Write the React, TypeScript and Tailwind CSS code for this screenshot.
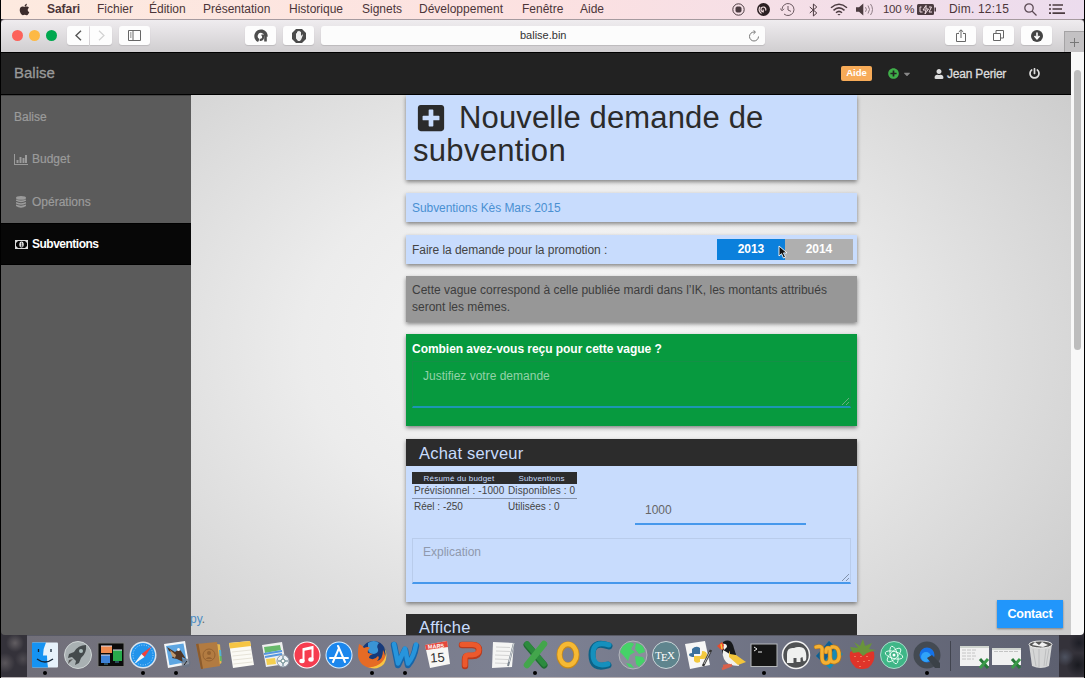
import React from "react";
import type { ReactNode } from "react";
import { FaApple, FaPowerOff, FaUser, FaCaretDown, FaPlusCircle, FaPlusSquare } from "react-icons/fa";

const menus: [string, string][] = [
  ["Fichier", "w-[52px]"],
  ["Édition", "w-[54px]"],
  ["Présentation", "w-[86px]"],
  ["Historique", "w-[73px]"],
  ["Signets", "w-[57px]"],
  ["Développement", "w-[103px]"],
  ["Fenêtre", "w-[58px]"],
  ["Aide", "w-[40px]"],
];

function MenuBar() {
  return (
    <header className="flex h-[19px] shrink-0 items-center bg-linear-to-r from-[#fdeadf] via-[#fce1e1] to-[#ecdcee] text-[12px] leading-[19px] text-[#4b3539]">
      <FaApple className="mr-[16px] ml-[17px] size-[13px] text-[#3d2d2c]" />
      <span className="w-[50px] font-bold tracking-[-0.050px]">Safari</span>
      {menus.map(([label, width]) => (
        <span key={label} className={"whitespace-nowrap " + width}>
          {label}
        </span>
      ))}
      <div className="ml-auto flex items-center">
        <svg className="mr-[12px] size-[13px]" viewBox="0 0 13 13" fill="none" stroke="#4b3b40">
          <circle cx="6.5" cy="6.5" r="5.7" />
          <rect x="4" y="4" width="5" height="5" rx="1" fill="#4b3b40" />
        </svg>
        <svg className="mr-[10px] size-[13px]" viewBox="0 0 13 13">
          <circle cx="6.5" cy="6.5" r="6.5" fill="#2b1f22" />
          <path d="M8.500 7.500A2.400 2.400 0 1 0 6.200 8.800V6.500M4.500 10.500A4.600 4.600 0 0 1 3 3.800" fill="none" stroke="#f3dde0" strokeWidth="1.200" />
        </svg>
        <svg className="mr-[14px] size-[15px]" viewBox="0 0 15 15" fill="none" stroke="#6b5960">
          <path d="M2 7.5A6 6 0 1 1 4 12M.3 6.5 2 8.800l2-2M8 4v4l3 1.400" />
        </svg>
        <svg className="mr-[12px] h-[14px] w-[9px]" viewBox="0 0 9 14" fill="none" stroke="#4b3b40" strokeWidth="1">
          <path d="m.8 4 7 6-3.400 3V1l3.400 3-7 6" />
        </svg>
        <svg className="mr-[8px] h-[13px] w-[18px]" viewBox="0 0 18 13" fill="none" stroke="#4b3b40" strokeWidth="1.500">
          <path d="M1 4.800q8-7 16 0M3.500 7.400q5.500-5 11 0M6 9.700q3-2.600 6 0" />
          <path d="M7.300 10.900h3.400L9 12.600z" fill="#4b3b40" stroke="none" />
        </svg>
        <svg className="mr-[9px] h-[13px] w-[18px]" viewBox="0 0 18 13">
          <path d="M0 4.300h3L7.300.6v11.800L3 8.700H0z" fill="#4b3b40" />
          <path d="M9.500 4.200q1.800 2.300 0 4.600M12 2.500q3 4 0 8M14.500 1q4 5.500 0 11" fill="none" stroke="#8d7c84" />
        </svg>
        <span className="w-[34px] text-[11.500px] tracking-[-0.300px] whitespace-nowrap">100 %</span>
        <svg className="mr-[13px] h-[11px] w-[19px]" viewBox="0 0 19 11">
          <rect width="17" height="11" rx="1.500" fill="#4b3b40" />
          <rect x="17.500" y="3.500" width="1.500" height="4" fill="#4b3b40" />
          <path d="M4.500 3H3v5h2.500M9 1.500 6 6h3l-1 4 3.500-5H9zM12 3h2.500L12 8h3" fill="none" stroke="#f1dde3" />
        </svg>
        <span className="w-[75px] tracking-[0.200px] whitespace-nowrap">Dim. 12:15</span>
        <svg className="mr-[12px] size-[13px]" viewBox="0 0 13 13" fill="none" stroke="#5c4b55" strokeWidth="1.300">
          <circle cx="5" cy="5" r="4.200" />
          <path d="m8 8 4.500 4.500" />
        </svg>
        <svg className="mr-[19px] h-[11px] w-[16px]" viewBox="0 0 16 11" fill="#4b3b40">
          <path d="M0 .300h2v1.400H0zM0 4.300h2v1.400H0zM0 8.300h2V10H0zM3.500.300h10.500v1.400H3.500zM3.500 4.300H13v1.400H3.500zM3.500 8.300H16v1.700H3.500z" />
        </svg>
      </div>
    </header>
  );
}

function ToolButton({ className, children }: { className: string; children: ReactNode }) {
  return (
    <div className={"flex h-[19px] items-center justify-center rounded-[3px] bg-[#fdfdfd] shadow-[0_1px_1px_#bcbabc] " + className}>
      {children}
    </div>
  );
}

function Toolbar() {
  return (
    <div className="flex h-[33px] shrink-0 items-center rounded-t-[4px] border-t border-[#a59a9f] bg-linear-to-b from-[#efecef] to-[#d0ced0] pb-px pl-[11px]">
      <div className="mr-[10px] flex gap-[6px]">
        <i className="size-[11px] rounded-full bg-[#fc625a]" />
        <i className="size-[11px] rounded-full bg-[#fdb945]" />
        <i className="size-[11px] rounded-full bg-[#00a84f]" />
      </div>
      <ToolButton className="mr-px w-[22px] rounded-r-none">
        <svg className="h-[11px] w-[7px]" viewBox="0 0 7 11" fill="none" stroke="#555" strokeWidth="1.400"><path d="M6 .8 1 5.500l5 4.700" /></svg>
      </ToolButton>
      <ToolButton className="mr-[7px] w-[22px] rounded-l-none">
        <svg className="h-[11px] w-[7px]" viewBox="0 0 7 11" fill="none" stroke="#d2d2d2" strokeWidth="1.200"><path d="m1 .8 5 4.700-5 4.700" /></svg>
      </ToolButton>
      <ToolButton className="mr-[95px] w-[31px]">
        <svg className="h-[11px] w-[13px]" viewBox="0 0 13 11" fill="none" stroke="#666"><path d="M.5.500h12v10H.500zM5 .500v10M2 3h1.500M2 5h1.500M2 7h1.500" /></svg>
      </ToolButton>
      <ToolButton className="mr-[7px] w-[31px]">
        <svg className="size-[14px]" viewBox="0 0 14 14" fill="none" stroke="#4d4d4d">
          <path d="M4.800 11.600A5 5 0 1 1 12 7.500" strokeWidth="3.400" />
          <path d="M11.500 6V12.500M8.700 5.500V9A2 2 0 0 1 6 10.500" strokeWidth="2.600" />
          <circle cx="6.600" cy="8" r="1.600" fill="#fdfdfd" stroke="none" />
        </svg>
      </ToolButton>
      <ToolButton className="mr-[7px] w-[31px]">
        <svg className="size-[14px]" viewBox="0 0 14 14">
          <path d="M4 0h6l4 4v6l-4 4H4l-4-4V4z" fill="#4a4a4a" />
          <path d="M4 7V4.500l1-.5V2.700l1.200-.5.8-.5 1 .7 1 .5V7l1.300-1.500.7.3-1.800 4.600L8 12H6L4 9.500z" fill="#eee" />
        </svg>
      </ToolButton>
      <div className="flex h-[19px] w-[444px] items-center rounded-[3px] bg-[#fcfcfc] shadow-[0_1px_1px_#bcbabc]">
        <span className="ml-[199px] text-[11px] text-[#333]">balise.bin</span>
        <svg className="mr-[5px] ml-auto size-[12px]" viewBox="0 0 12 12" fill="none" stroke="#777"><path d="M10.500 6.500A4.500 4.500 0 1 1 6 2h1M5.500.3 7.500 2.100 5.500 4" /></svg>
      </div>
      <ToolButton className="mr-[7px] ml-auto w-[31px]">
        <svg className="h-[13px] w-[10px]" viewBox="0 0 10 13" fill="none" stroke="#666"><path d="M3 4.500H.5v8h9v-8H7M5 9V1M2.700 3 5 .8 7.300 3" /></svg>
      </ToolButton>
      <ToolButton className="mr-[7px] w-[31px]">
        <svg className="size-[11px]" viewBox="0 0 11 11" fill="none" stroke="#666"><path d="M.5 3.500h7v7h-7zM3 3V.5h7.500V8H8" /></svg>
      </ToolButton>
      <ToolButton className="mr-[12px] w-[31px]">
        <svg className="size-[12px]" viewBox="0 0 12 12"><circle cx="6" cy="6" r="6" fill="#444" /><path d="M6 2.500V8M3.500 6 6 8.700 8.500 6" fill="none" stroke="#fff" strokeWidth="1.600" /></svg>
      </ToolButton>
      <div className="-mb-px flex h-[21px] w-[20px] items-center justify-center self-end border-t border-l border-[#a5a3a5] bg-[#c3c1c3]">
        <svg className="size-[9px]" viewBox="0 0 9 9" stroke="#777"><path d="M4.500 0v9M0 4.500h9" /></svg>
      </div>
    </div>
  );
}

function Navbar() {
  return (
    <nav className="flex h-[43px] shrink-0 items-center border-y border-black bg-[#222] pl-[13px] text-[12px] text-[#ddd]">
      <span className="text-[15px] [-webkit-text-stroke:0.300px_#999] text-[#999]">Balise</span>
      <span className="mr-[16px] ml-auto flex h-[15px] w-[31px] items-center justify-center rounded-[2px] bg-[#f7ab58] text-[9.500px] font-bold text-white">Aide</span>
      <FaPlusCircle className="mr-[3px] size-[11px] text-[#3fae49]" />
      <FaCaretDown className="mr-[22px] size-[10px] text-[#888]" />
      <FaUser className="mr-[3px] size-[10px]" />
      <span className="w-[82px] text-[12px] tracking-[-0.200px] whitespace-nowrap [-webkit-text-stroke:0.300px_#ddd]">Jean Perier</span>
      <FaPowerOff className="mr-[31px] size-[11px]" />
    </nav>
  );
}

function Sidebar() {
  return (
    <aside className="flex w-[190px] shrink-0 flex-col border-t border-[#444] bg-[#5b5b5b] text-[12px] text-[#9b9b9b] [-webkit-text-stroke:0.200px_#9b9b9b]">
      <div className="flex h-[42px] items-center pl-[13px]">Balise</div>
      <div className="flex h-[42px] items-center pl-[13px]">
        <svg className="mr-[4px] h-[11px] w-[14px]" viewBox="0 0 14 11" fill="currentColor"><path d="M0 0h1v10h13v1H0zM2.500 6h2v3h-2zM5.500 3h2v6h-2zM8.500 4h2v5h-2zM11 1h2v8h-2z" /></svg>
        Budget
      </div>
      <div className="flex h-[43px] items-center pl-[15px]">
        <svg className="mr-[6px] h-[12px] w-[10px]" viewBox="0 0 10 12" fill="currentColor">
          <ellipse cx="5" cy="1.900" rx="5" ry="1.900" />
          <path d="M0 3.400q5 2.300 10 0v1.400q-5 2.800-10 0zM0 6q5 2.300 10 0v1.400q-5 2.800-10 0zM0 8.600q5 2.300 10 0V10q-5 3.500-10 0z" />
        </svg>
        Opérations
      </div>
      <div className="flex h-[42px] items-center border-y border-black bg-[#070707] pl-[14px] font-bold tracking-[-0.500px] text-white [-webkit-text-stroke:0]">
        <svg className="mr-[4px] h-[9px] w-[13px]" viewBox="0 0 13 9"><path fillRule="evenodd" d="M0 0h13v9H0zM1 3v3l2 2h7l2-2V3l-2-2H3z" fill="#ddd" /><ellipse cx="6.500" cy="4.500" rx="2.200" ry="2.900" fill="#eee" /><path d="m5.800 3.600.9-.8v3.500M5.600 6.200h2" stroke="#222" fill="none" strokeWidth=".8" /></svg>
        Subventions
      </div>
    </aside>
  );
}

const shadow = "shadow-[0_2px_4px_rgba(0,0,0,0.45)] ";

function Grip({ color }: { color: string }) {
  return (
    <svg className="absolute right-px bottom-[1px] size-[7px]" viewBox="0 0 7 7" stroke={color} strokeWidth=".8"><path d="M0 7 7 0M4 7l3-3" /></svg>
  );
}

function Content() {
  return (
    <main className="relative flex min-w-0 flex-1 flex-col items-start overflow-hidden bg-[radial-gradient(ellipse_640px_450px_at_380px_250px,#f8f8f8_0%,#ececec_42%,#cbcbcb_100%)] pl-[215px] text-[12.500px] text-[#444]">
      <div className={shadow + "h-[85px] w-[451px] shrink-0 bg-[#c8dcfd] pt-[6px] pl-[7px] text-[31px] leading-[33px] text-[#2b2b2b]"}>
        <div className="flex items-center whitespace-nowrap">
          <FaPlusSquare className="mr-[13px] ml-[3px] size-[30px]" />
          <span className="tracking-[0.150px]">Nouvelle demande de</span>
        </div>
        <div className="tracking-[0.300px]">subvention</div>
      </div>
      <div className={shadow + "mt-[13px] flex h-[29px] w-[451px] shrink-0 items-center bg-[#c8dcfd] pl-[6px] text-[12px] tracking-[-0.060px] text-[#4a90d2]"}>Subventions Kès Mars 2015</div>
      <div className={shadow + "mt-[13px] flex h-[29px] w-[451px] shrink-0 items-center justify-between bg-[#c8dcfd] pr-[4px] pl-[6px] text-[12px] tracking-[-0.040px]"}>
        <span>Faire la demande pour la promotion :</span>
        <div className="flex text-[12px] leading-[21px] font-bold text-white">
          <span className="w-[68px] bg-[#0b80dc] text-center">2013</span>
          <span className="w-[68px] bg-[#afafaf] text-center">2014</span>
        </div>
      </div>
      <div className={shadow + "mt-[12px] h-[46px] w-[451px] shrink-0 bg-[#979797] pt-[6px] pl-[6px] text-[12px] leading-[17px] whitespace-nowrap text-[#3d3d3d]"}>
        Cette vague correspond à celle publiée mardi dans l’IK, les montants attribués
        <br />
        seront les mêmes.
      </div>
      <div className={shadow + "mt-[12px] h-[92px] w-[451px] shrink-0 bg-[#079a3f] px-[6px] pt-[7px] text-[12px]"}>
        <div className="h-[20px] leading-[17px] font-bold tracking-[-0.040px] text-white">Combien avez-vous reçu pour cette vague ?</div>
        <div className="relative h-[47px] border border-b-2 border-[#149046] border-b-[#1c96b4] pt-[6px] pl-[10px] leading-[17px] text-[#93d2a8]">
          Justifiez votre demande
          <Grip color="#7fb891" />
        </div>
      </div>
      <section className={shadow + "mt-[13px] h-[163px] w-[451px] shrink-0 bg-[#c8dcfd]"}>
        <h2 className="h-[27px] bg-[#2c2c2c] pl-[13px] text-[16.500px] leading-[28px] tracking-[0.200px] text-[#c8dcfd]">Achat serveur</h2>
        <div className="flex h-[72px] pt-[6px] pl-[6px]">
          <div className="w-[165px] text-[10px] leading-[15px] whitespace-nowrap">
            <div className="flex h-[12px] bg-[#2c2c2c] text-[8px] leading-[13px] tracking-[0.200px] text-[#c8dcfd]">
              <span className="w-[94px] text-center">Résumé du budget</span>
              <span className="w-[71px] text-center">Subventions</span>
            </div>
            <div className="flex h-[15px] border-b border-[#8593ad] pl-[2px] leading-[14px]">
              <span className="w-[94px] tracking-[0.100px]">Prévisionnel : -1000</span>
              <span className="tracking-[0.100px]">Disponibles : 0</span>
            </div>
            <div className="flex pl-[2px]">
              <span className="w-[94px]">Réel : -250</span>
              <span>Utilisées : 0</span>
            </div>
          </div>
          <div className="ml-[58px] h-[53px] w-[171px] border-b-2 border-[#4698ec] pt-[29px] pl-[10px] text-[12px] leading-[18px] text-[#666]">1000</div>
        </div>
        <div className="relative mx-[6px] h-[46px] border border-b-2 border-[#b9cceb] border-b-[#4698ec] pt-[5px] pl-[10px] text-[12px] leading-[17px] text-[#8f99ad]">
          Explication
          <Grip color="#6f7d94" />
        </div>
      </section>
      <section className="mt-[12px] w-[451px] shrink-0 bg-[#2c2c2c] pb-[34px]">
        <h2 className="pl-[13px] text-[16.500px] leading-[26px] tracking-[0.200px] text-[#c8dcfd]">Affiche</h2>
      </section>
      <span className="absolute top-[515px] -left-px text-[12px] text-[#666]"><span className="text-[#4a8cc4]">py</span>.</span>
      <div className="absolute right-[8px] bottom-[7px] flex h-[28px] w-[66px] items-center justify-center bg-[#2196fb] text-[12.500px] font-bold tracking-[-0.200px] text-white shadow-[0_1px_2px_rgba(0,0,0,0.4)]">Contact</div>
      <svg className="absolute top-[150px] left-[587px] h-[14px] w-[10px]" viewBox="0 0 10 14"><path d="M1 1v10l2.500-2.300L5.500 13l2-.9-2-4.200H9z" fill="#111" stroke="#fff" strokeWidth=".9" /></svg>
    </main>
  );
}

const serif = "Liberation Serif, serif";

const apps: { name: string; running?: boolean; art: ReactNode }[] = [
  { name: "finder", running: true, art: <><rect x="3" y="3.500" width="26" height="25" rx="1" fill="#e6f2fb" /><path d="M4 3.500h13q-3 6-3 13h4q0 7 1 12H4q-1 0-1-1v-23q0-1 1-1z" fill="#1593f2" /><path d="M9.500 10v3M22 10v3M8 20q8 6 16 0" fill="none" stroke="#123" strokeWidth="1.300" /></> },
  { name: "launchpad", art: <><circle cx="16" cy="16" r="13.500" fill="#a9b1b3" stroke="#d0d6d6" /><path d="M24 6q-8 0-12 7l-5 2-1 4 4-1 4 4-1 4 4-2 2-5q6-5 5-13z" fill="#444a4c" /><circle cx="19" cy="12" r="2" fill="#abb" /><path d="m11 20-5 5 1-4z" fill="#555" /></> },
  { name: "mission", art: <><rect x="3" y="4" width="26" height="23.500" fill="#0b0b0b" stroke="#777" /><path d="M6 7h11v7H6z" fill="#f08b50" /><path d="M6 16h9v8H6z" fill="#3f83d8" /><path d="M18 11h9v11h-9z" fill="#28ab4c" /><path d="M6 7h11M6 16h9M18 11h9" stroke="#dde" /><path d="M9 25h4M20 23h4" stroke="#48a" /></> },
  { name: "safari", running: true, art: <><circle cx="16" cy="16" r="13.500" fill="#dce5ee" /><circle cx="16" cy="16" r="12" fill="#2293eb" /><circle cx="16" cy="16" r="10" fill="none" stroke="#a6d8ff" strokeWidth="1" strokeDasharray="1 1.500" /><path d="m25 7-7.500 11-3-3z" fill="#f0403b" /><path d="m7 25 7.500-10 3 3z" fill="#f5f5f5" /></> },
  { name: "mail", running: true, art: <><path d="m4 5 21-3 4 23-21 4z" fill="#f3f5f7" /><path d="m6 7 17.500-2.600 3.300 18.600-17.300 3.300z" fill="#5ea6e2" /><path d="m7 8 8 5 4-3 2 2 5 8-4-2 1 5-6-3-5-1 2-4-5-3z" fill="#4d3526" /><path d="m10 11 6 5-1 3-3-2z" fill="#c49a6c" /><circle cx="18.500" cy="10.500" r="1.500" fill="#f5f5f5" /><circle cx="26" cy="24" r="4.500" fill="#6a7485" fillOpacity=".75" /><path d="m24 26 3-4" stroke="#222" /></> },
  { name: "contacts", art: <><path d="m24 5 3 .5L28.500 24l-3 2z" fill="#e6b84f" /><path d="M26 11h2l.5 6h-2z" fill="#54b2d2" /><path d="M26.500 17h2l.3 5h-2z" fill="#63b864" /><path d="m3 5 21-2 3 24-19 3z" fill="#b27b41" /><path d="m3 5 2.500-.3L10 29.700 8 30z" fill="#8c5b2c" /><circle cx="16" cy="16" r="6" fill="none" stroke="#946231" /><circle cx="16" cy="14" r="2" fill="#946231" /><path d="M12.500 20q3.500-4 7 0z" fill="#946231" /></> },
  { name: "notes", art: <><path d="m4 4 21-2 4 24-21 3z" fill="#fbfaf5" /><path d="m4 4 21-2 1 5-21 2.500z" fill="#f6c544" /><path d="m7 13 19-2M7.500 17l19-2M8 21l19-2M8.500 25l19-2" stroke="#ddd8cc" strokeWidth=".7" /></> },
  { name: "maps", art: <><path d="m4 6 20-3 4 22-20 3z" fill="#eee" /><path d="m6 8 16-2 1 5-16 3z" fill="#67b96b" /><path d="m6 15 18-3M7 18l17-3" stroke="#5597e0" strokeWidth="2" /><path d="m8 20 9-1 1 6-9 1z" fill="#f4cf50" /><circle cx="25" cy="22" r="6" fill="#edf0f3" stroke="#8a98a6" /><circle cx="25" cy="22" r="2" fill="#fff" stroke="#688" /><path d="M25 17v3m0 4v3m-5-5h3m4 0h3" stroke="#578" /></> },
  { name: "music", art: <><circle cx="16" cy="16" r="13.500" fill="#fff" /><circle cx="16" cy="16" r="12.500" fill="#f63c4f" /><path d="M12.500 22V10l9-2v12" fill="none" stroke="#fff" strokeWidth="2" /><path d="m12 11 10-2" stroke="#fff" strokeWidth="2" /><ellipse cx="11" cy="22" rx="2.700" ry="2.200" fill="#fff" /><ellipse cx="20" cy="20.500" rx="2.700" ry="2.200" fill="#fff" /></> },
  { name: "store", art: <><circle cx="16" cy="16" r="13.500" fill="#dcefff" /><circle cx="16" cy="16" r="12.500" fill="#1c87ed" /><path d="m10 23 6-14 6 14M7 19h18M16 9l-1-2" fill="none" stroke="#fff" strokeWidth="2" strokeLinecap="round" /></> },
  { name: "firefox", running: true, art: <><circle cx="17.500" cy="14.500" r="12.500" fill="#173a7a" /><path d="M12 4q6-4 11 0-3 3-1 6 1 4-4 5-5 0-6-4z" fill="#3a95d6" /><path d="M3 5q3 1 5 4 4-2 6 0-3 2-2 5l5 1q-4 1-4 4 5 3 9-2 2 2-1 5 6-1 6-11 4 7 1 12-5 7-14 6Q2 26 2 15 2 9 3 5z" fill="#e66b25" /><path d="M28 8q4 9-2 15-6 6-14 5 9 4 16-3 5-9 0-17z" fill="#f8c443" /></> },
  { name: "word", running: true, art: <><path d="m5 6 4 20 7-15 3 15q6-7 8-19" fill="none" stroke="#1765a8" strokeWidth="6.500" strokeLinejoin="round" strokeLinecap="round" /><path d="m5 5 4 19.500 7-15 3 15q6-7 8-19" fill="none" stroke="#2795dc" strokeWidth="4.500" strokeLinejoin="round" strokeLinecap="round" /></> },
  { name: "calendar", art: <><path d="m4 6 22-4 3 23-20 4z" fill="#f8f7f5" /><path d="m4 6 22-4 1 6-22 3z" fill="#e5483c" /><text x="7" y="9" fontSize="5.500" fill="#fff" fontFamily="Liberation Sans" fontWeight="bold" transform="rotate(-5 16 8)">MARS</text><text x="9" y="23" fontSize="13" fill="#333" fontFamily="Liberation Sans" transform="rotate(-4 16 16)">15</text></> },
  { name: "powerpoint", art: <><path d="M8 6h10q7 0 7 5.500T18 17h-4q-3 0-3 4v6" fill="none" stroke="#b93a1d" strokeWidth="6.500" strokeLinejoin="round" strokeLinecap="round" /><path d="M8 5.500h10q7 0 7 5t-7 5.500h-4q-3 0-3 4v6" fill="none" stroke="#ec592d" strokeWidth="5" strokeLinejoin="round" strokeLinecap="round" /></> },
  { name: "text", art: <><path d="m6 3 21 1-2 24-20 1z" fill="#f5f5f4" /><path d="m9 8 14 .5M9 12l14 .5M8 16l14 .5M8 20l13 .5M8 24l13 .5" stroke="#c9c9c9" strokeWidth=".8" /><path d="m27 4-6 23" stroke="#7b858f" strokeWidth="2" /><path d="m27 4-5 19" stroke="#d6d8dc" /></> },
  { name: "excel", running: true, art: <><path d="m8 6 17 20" stroke="#216c32" strokeWidth="7" strokeLinecap="round" /><path d="m8 5 17 20" stroke="#2c8b3e" strokeWidth="5.500" strokeLinecap="round" /><path d="M25 5 8 26" stroke="#43a64c" strokeWidth="6.500" strokeLinecap="round" /></> },
  { name: "outlook", art: <><ellipse cx="16" cy="16" rx="8.500" ry="10.500" fill="none" stroke="#c98a16" strokeWidth="6" /><ellipse cx="16" cy="15.500" rx="8.500" ry="10.500" fill="none" stroke="#f6b934" strokeWidth="4.500" /></> },
  { name: "communicator", art: <><path d="M25 7Q8 1 8 16t16 10" fill="none" stroke="#0c6287" strokeWidth="7" strokeLinecap="round" /><path d="M25 6Q9 1 9 15t15 10" fill="none" stroke="#1590bd" strokeWidth="5" strokeLinecap="round" /></> },
  { name: "globe", art: <><circle cx="16" cy="16" r="14" fill="#8b8e9c" stroke="#b1b6bb" /><path d="M5 8q7-7 12-3l-3 5 4 3-5 3-2 6-5-6-3-3zM19 4q8 1 9 9l-6 2-4-5zM18 17l8 1 2 4-6 6-3-3zM9 24l5 1 3 4-5-1z" fill="#45d268" /></> },
  { name: "tex", art: <><circle cx="16" cy="16" r="13.500" fill="#5f858e" stroke="#cbd6d9" /><text x="5" y="20" fontSize="11" fill="#fff" fontFamily={serif}>T</text><text x="11" y="22" fontSize="11" fill="#fff" fontFamily={serif}>E</text><text x="17" y="20" fontSize="11" fill="#fff" fontFamily={serif}>X</text></> },
  { name: "python", art: <><path d="m3 5 20-3 5 24-20 4z" fill="#f6f6f6" /><path d="M10 14v-4q4-4 8-1v6h-6v3q-4 0-5-2 0-2 3-2z" fill="#3c719d" /><path d="M20 12q5 0 5 4t-4 4h-3v3q-4 2-6-1v-5h6q2 0 2-5z" fill="#f3c93e" /><path d="m29 11-8 16" stroke="#333" strokeWidth="2.500" /><path d="m22 25 6-12" stroke="#bbb" /></> },
  { name: "bird", art: <><path d="M8 3q7-4 10 3l3 10-4 5Q8 19 7 12z" fill="#17191b" /><path d="M7 5q5-1 5 3l-3 3zM8 11q4 2 8 5 7 4 8 11-12 0-15-7-2-4-1-9z" fill="#f2f2ee" /><path d="m2 7 5-4 2 3-1 5-3-1z" fill="#e84b2c" /><path d="m6 5 1 5" stroke="#f5c23b" strokeWidth="1.500" /><path d="m14 12 7 4 10 7-8 3-9-8z" fill="#f2c53c" /><path d="M14 7q5 3 7 9l-6-1z" fill="#17191b" /><path d="m7 30 10-4m-9 1 7-1" stroke="#d9604a" strokeWidth="2.500" /></> },
  { name: "terminal", running: true, art: <><rect x="3" y="5" width="26" height="22.500" fill="#151515" stroke="#b5b8bb" /><path d="m6 8 3 2-3 2M10 13h4" fill="none" stroke="#eee" /></> },
  { name: "mamp", art: <><circle cx="16" cy="16" r="13.500" fill="#4f5153" stroke="#f3f3f3" strokeWidth="1.500" /><path d="M7 24V15q0-7 7-6 2-1 4-1 7-1 8 6 1 7-1 8-2 1-2-1l-.5-3-2 1v4h-4v-4h-3v5z" fill="#eff0ef" /></> },
  { name: "transmit", art: <><path d="m16 2 14 13-13 15L3 17z" fill="#168ab5" /><path d="m16 2 7 6.500L10 23.500 3 17z" fill="#105d91" /><path d="M3 8q7-2 6 4v6q0 6 4 6t4-5v-7q0-3-2-3t-2 4M17 17q0 7 5 6 5-1 4-9-1-7-7-6" fill="none" stroke="#b9781a" strokeWidth="4.500" strokeLinecap="round" /><path d="M3 8q7-2 6 4v6q0 6 4 6t4-5v-7q0-3-2-3t-2 4M17 17q0 7 5 6 5-1 4-9-1-7-7-6" fill="none" stroke="#f4b133" strokeWidth="3.300" strokeLinecap="round" /></> },
  { name: "berry", art: <><path d="M4 13q12-7 24 0 2 10-6 16-6 2-12 0Q2 22 4 13z" fill="#df3429" /><path d="M9 17v1m6-1v1m6-1v1m-9 4v1m6-1v1m5-2v1m-9 5v1" stroke="#ffb288" /><path d="m4 8 8 1-4-6 6 4 3-7 2 7 7-3-3 6 7 1-9 3-4 3-4-4-6 1z" fill="#69943b" /></> },
  { name: "atom", art: <><circle cx="16" cy="16" r="13.500" fill="#3fb687" stroke="#a9ddcb" /><g fill="none" stroke="#eafff5" strokeWidth=".9"><ellipse cx="16" cy="16" rx="9" ry="3.500" transform="rotate(15 16 16)" /><ellipse cx="16" cy="16" rx="9" ry="3.500" transform="rotate(75 16 16)" /><ellipse cx="16" cy="16" rx="9" ry="3.500" transform="rotate(135 16 16)" /></g><circle cx="16" cy="16" r="1.500" fill="#fff" /></> },
  { name: "quicktime", running: true, art: <><circle cx="16" cy="16" r="10.500" fill="#1672e8" stroke="#444a52" strokeWidth="6" /><circle cx="15" cy="18" r="5" fill="#3cb8ff" fillOpacity=".7" /><path d="m16 19 5-3 8 8v5h-5z" fill="#3b4148" /></> },
];

function SheetThumb({ short }: { short?: boolean }) {
  return (
    <svg className="size-[32px] shrink-0" viewBox="0 0 32 32">
      <rect x="1" y={short ? 9 : 7} width="29" height={short ? 17 : 20} fill="#f1f1f1" />
      <path d={short ? "M1 10h29" : "M1 8h29"} stroke="#cfd4cf" strokeWidth="2" />
      <path d={short ? "M3 12.500h25" : "M3 11h15M3 14h13M3 17h15M3 20h12"} stroke="#c4c4c4" strokeDasharray="4 1" />
      <path d="m21 20 8 9" stroke="#267638" strokeWidth="3" />
      <path d="m29 20-8 9" stroke="#3a9a48" strokeWidth="3" />
    </svg>
  );
}

function Dock() {
  return (
    <footer className="flex h-[43px] shrink-0 justify-start border-b border-[#b7b1b4] bg-[#34323a] bg-[radial-gradient(circle_at_14px_8px,#625e62_0,transparent_9px),radial-gradient(circle_at_4px_28px,#5a565b_0,transparent_10px),radial-gradient(circle_at_22px_24px,#4d4a50_0,transparent_8px),radial-gradient(circle_at_1064px_22px,#4d5260_0,transparent_9px),radial-gradient(circle_at_1077px_30px,#191a20_0,transparent_12px),radial-gradient(circle_at_1078px_8px,#1d1e26_0,transparent_10px)] pl-[26px]">
      <div className="flex h-full w-[1032px] border-t border-[#595a65] bg-linear-to-r from-[#716f79] via-[#7d8193] to-[#5d6070] pl-[2px]">
        {apps.map((app) => (
          <div key={app.name} className="flex w-[32.660px] shrink-0 flex-col items-center pt-[3px]">
            <svg className="size-[32px] shrink-0" viewBox="0 0 32 32">{app.art}</svg>
            {app.running && <i className="size-[4px] rounded-full bg-black" />}
          </div>
        ))}
        <i className="mt-[5px] mr-[8px] ml-[7px] h-[30px] w-px shrink-0 bg-[#41444f]" />
        <div className="flex pt-[3px]">
          <SheetThumb />
          <SheetThumb short />
          <svg className="ml-px size-[32px] shrink-0" viewBox="0 0 32 32">
            <path d="M5 5h23l-3 22q-8 4-17 0z" fill="#d5d6d6" />
            <ellipse cx="16.500" cy="5.500" rx="11.500" ry="3.500" fill="#555" stroke="#ededed" />
            <path d="m8 6 3-3 4 3 3-3 6 3-5 2z" fill="#f1f1f1" />
            <path d="m9 10 3 17M15 10v18m7-18-2 17m5-17-3 17" stroke="#b1b3b4" strokeWidth=".7" />
          </svg>
        </div>
      </div>
    </footer>
  );
}

export default function App() {
  return (
    <div className="flex h-[678px] w-[1085px] flex-col overflow-hidden border-x border-black bg-[#34323a] font-['Liberation_Sans',Arial,sans-serif]">
      <MenuBar />
      <Toolbar />
      <div className="flex min-h-0 flex-1 overflow-hidden rounded-b-[4px]">
        <div className="flex min-w-0 flex-1 flex-col">
          <Navbar />
          <div className="flex min-h-0 flex-1">
            <Sidebar />
            <Content />
          </div>
        </div>
        <div className="flex w-[13px] justify-center bg-[#f8f8f8] pt-[18px]">
          <i className="h-[280px] w-[7px] rounded-full bg-[#bdbdbd]" />
        </div>
      </div>
      <Dock />
    </div>
  );
}
